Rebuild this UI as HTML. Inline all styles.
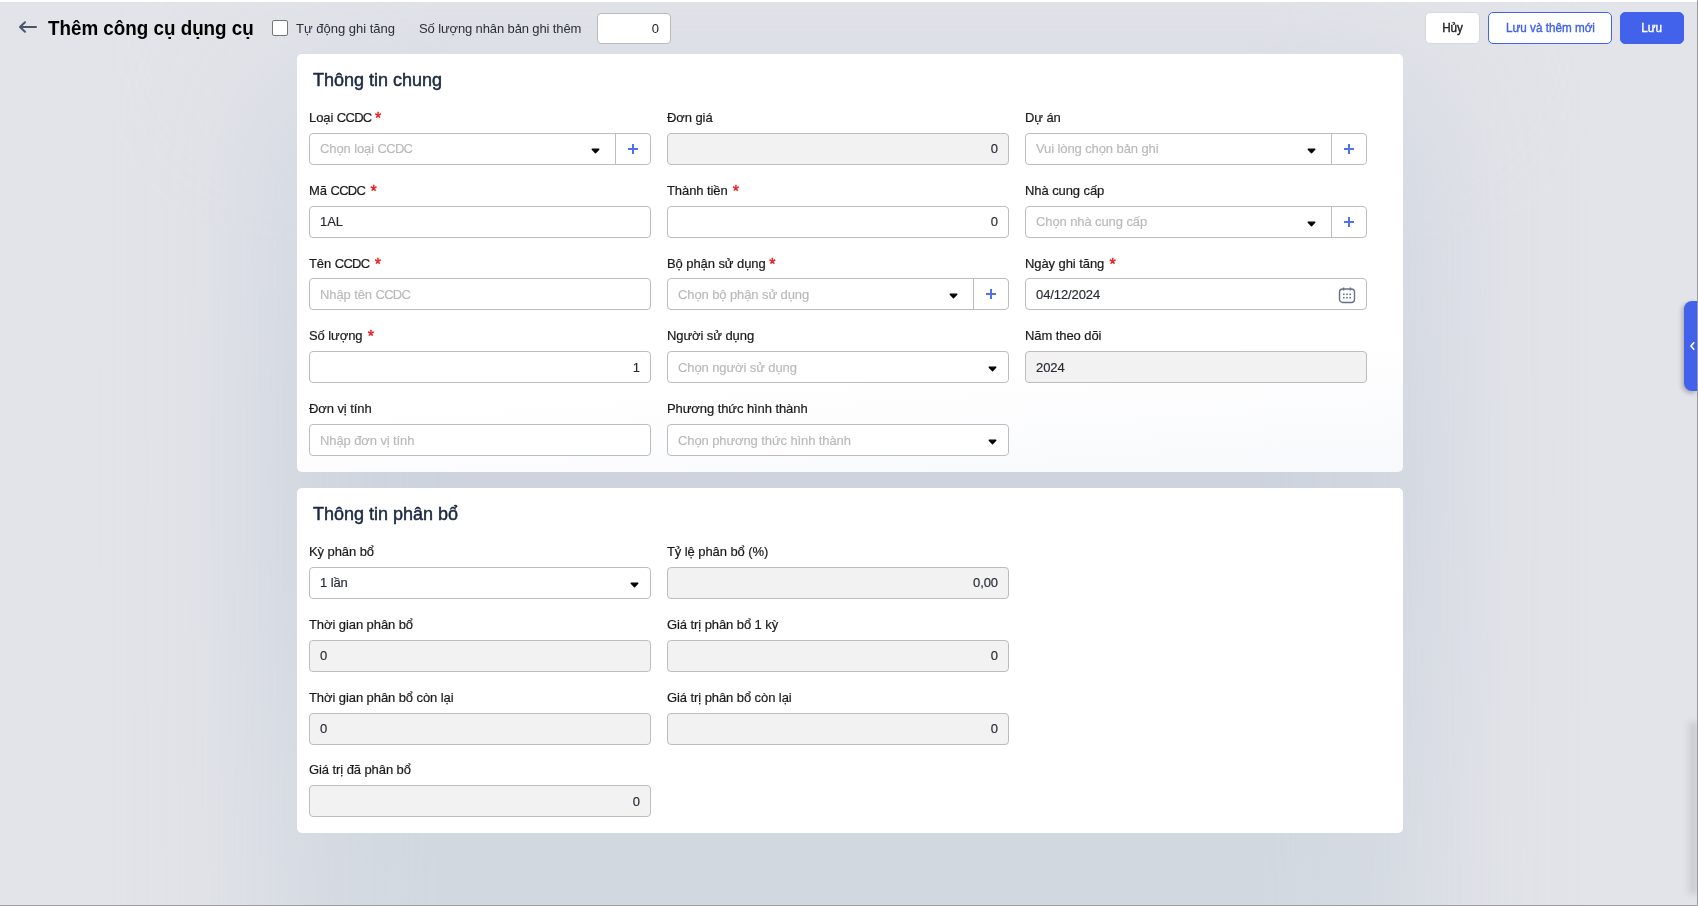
<!DOCTYPE html>
<html><head><meta charset="utf-8">
<style>
*{box-sizing:border-box;margin:0;padding:0}
html,body{width:1698px;height:906px;overflow:hidden}
body{will-change:transform;font-family:"Liberation Sans",sans-serif;font-size:13px;color:#212121;background:#e2e4e9;position:relative}
.topline{position:absolute;left:0;top:0;width:1697px;height:2px;background:#fff}
.rline{position:absolute;right:0;top:0;width:1px;height:906px;background:#9a9a9a}
.bline{position:absolute;left:0;bottom:0;width:1698px;height:1px;background:#a0a0a0}
.halo{position:absolute;left:267px;top:75px;width:1166px;height:1000px;background:linear-gradient(#d3d8e1,#cdd3dd 40%,#d2d8e0 75%,#d4dae2);filter:blur(70px)}
.abs{position:absolute}
.title{left:48px;top:17px;font-size:20px;font-weight:bold;color:#000;transform:scaleX(.94);transform-origin:0 0;white-space:nowrap}
.back{left:17px;top:18px}
.cb{left:272px;top:20px;width:16px;height:16px;border:1px solid #777;border-radius:2px;background:#fff}
.t13{font-size:13px;color:#2b2f38;white-space:nowrap}
.num{left:597px;top:13px;width:74px;height:31px;border:1px solid #bababa;border-radius:4px;background:#fff;text-align:right;padding-right:11px;line-height:30px}
.btn{top:12px;height:32px;border-radius:5px;text-align:center;line-height:30px;font-size:13px;-webkit-text-stroke:.4px currentColor;white-space:nowrap}
.btn span{display:inline-block;transform:scaleX(.9)}
.b1{left:1425px;width:55px;background:#fff;border:1px solid #d3d7de;color:#222}
.b2{left:1488px;width:124px;background:#fff;border:1px solid #4262ec;color:#4262ec}
.b3{left:1620px;width:64px;background:#4262ec;border:1px solid #4262ec;color:#fff}
.card{position:absolute;left:297px;width:1106px;background:#fff;border-radius:5px}
.c1{top:54px;height:418px;background:linear-gradient(176deg,#fff 72%,#f8f9fc 100%)}
.c2{top:488px;height:345px}
.h2{position:absolute;left:16px;font-size:18px;color:#1c2840;-webkit-text-stroke:.5px #1c2840;white-space:nowrap}
.lbl{position:absolute;font-size:13px;line-height:15px;color:#1a1a1a;-webkit-text-stroke:.2px #1a1a1a;white-space:nowrap;letter-spacing:-.08px}
.req{position:relative;top:1.5px;line-height:0;color:#f21616;font-size:16px;-webkit-text-stroke:.4px #f21616;letter-spacing:0}
.inp{position:absolute;width:342px;height:32px;border:1px solid #bdbdbd;border-radius:4px;background:#fff;line-height:30px;padding:0 10px;white-space:nowrap;color:#262a33;letter-spacing:-.1px;-webkit-text-stroke:.15px currentColor}
.cc{letter-spacing:-.7px}
.dis{background:#f2f2f2}
.ph{color:#b9b9b9}
.r{text-align:right}
.caret{position:absolute;top:13.5px;width:9px;height:7px;background:none}
.ca1{left:281px}.ca2{left:319.5px}
.plus{position:absolute;top:0;right:0;width:35px;height:30px;border-left:1px solid #bdbdbd}
.plus:before{content:"";position:absolute;left:12px;top:13.8px;width:10px;height:1.9px;background:#5170f0}
.plus:after{content:"";position:absolute;left:16.05px;top:9.8px;width:1.9px;height:10px;background:#5170f0}
.cal{position:absolute;right:10px;top:6.8px}
.rshadow{position:absolute;left:1686px;top:722px;width:11px;height:172px;background:linear-gradient(to right,rgba(0,0,0,0),rgba(0,0,0,.17));filter:blur(3px)}
.tab{position:absolute;left:1684px;top:301px;width:14px;height:90px;background:#4262ec;border-radius:8px 0 0 8px;box-shadow:-2px 2px 4px rgba(0,0,0,.25)}
</style></head>
<body>
<div class="halo"></div>
<div class="topline"></div>
<svg class="abs back" width="22" height="18" viewBox="0 0 22 18"><path d="M3 9H19M8 4.2L3 9L8 13.8" fill="none" stroke="#4b5468" stroke-width="2" stroke-linecap="round" stroke-linejoin="round"/></svg>
<div class="abs title">Thêm công cụ dụng cụ</div>
<div class="abs cb"></div>
<div class="abs t13" style="left:296px;top:21px">Tự động ghi tăng</div>
<div class="abs t13" style="left:419px;top:21px;letter-spacing:-.12px">Số lượng nhân bản ghi thêm</div>
<div class="abs num">0</div>
<div class="abs btn b1"><span>Hủy</span></div>
<div class="abs btn b2"><span>Lưu và thêm mới</span></div>
<div class="abs btn b3"><span>Lưu</span></div>
<div class="card c1">
<div class="h2" style="top:16px">Thông tin chung</div>
<div class="lbl" style="left:12px;top:56px">Loại <span class="cc">CCDC</span> <span class="req">*</span></div>
<div class="inp ph" style="left:12px;top:79px">Chọn loại <span class="cc">CCDC</span><svg class="caret ca1" viewBox="0 0 9 7"><path d="M1.2 1.2H7.8L4.5 4.7Z" fill="#000" stroke="#000" stroke-width="1.3" stroke-linejoin="round"/></svg><span class="plus"></span></div>
<div class="lbl" style="left:12px;top:129px">Mã <span class="cc">CCDC</span> <span class="req" style="margin-left:1.7px">*</span></div>
<div class="inp " style="left:12px;top:152px">1AL</div>
<div class="lbl" style="left:12px;top:202px">Tên <span class="cc">CCDC</span> <span class="req" style="margin-left:1.7px">*</span></div>
<div class="inp ph" style="left:12px;top:224px;padding-top:1px">Nhập tên <span class="cc">CCDC</span></div>
<div class="lbl" style="left:12px;top:274px">Số lượng <span class="req" style="margin-left:1.7px">*</span></div>
<div class="inp r" style="left:12px;top:297px;padding-top:1px">1</div>
<div class="lbl" style="left:12px;top:347px">Đơn vị tính</div>
<div class="inp ph" style="left:12px;top:370px;padding-top:1px">Nhập đơn vị tính</div>
<div class="lbl" style="left:370px;top:56px">Đơn giá</div>
<div class="inp dis r" style="left:370px;top:79px">0</div>
<div class="lbl" style="left:370px;top:129px">Thành tiền <span class="req" style="margin-left:1.7px">*</span></div>
<div class="inp r" style="left:370px;top:152px">0</div>
<div class="lbl" style="left:370px;top:202px">Bộ phận sử dụng <span class="req">*</span></div>
<div class="inp ph" style="left:370px;top:224px;padding-top:1px">Chọn bộ phận sử dụng<svg class="caret ca1" viewBox="0 0 9 7"><path d="M1.2 1.2H7.8L4.5 4.7Z" fill="#000" stroke="#000" stroke-width="1.3" stroke-linejoin="round"/></svg><span class="plus"></span></div>
<div class="lbl" style="left:370px;top:274px">Người sử dụng</div>
<div class="inp ph" style="left:370px;top:297px;padding-top:1px">Chọn người sử dụng<svg class="caret ca2" viewBox="0 0 9 7"><path d="M1.2 1.2H7.8L4.5 4.7Z" fill="#000" stroke="#000" stroke-width="1.3" stroke-linejoin="round"/></svg></div>
<div class="lbl" style="left:370px;top:347px">Phương thức hình thành</div>
<div class="inp ph" style="left:370px;top:370px;padding-top:1px">Chọn phương thức hình thành<svg class="caret ca2" viewBox="0 0 9 7"><path d="M1.2 1.2H7.8L4.5 4.7Z" fill="#000" stroke="#000" stroke-width="1.3" stroke-linejoin="round"/></svg></div>
<div class="lbl" style="left:728px;top:56px">Dự án</div>
<div class="inp ph" style="left:728px;top:79px">Vui lòng chọn bản ghi<svg class="caret ca1" viewBox="0 0 9 7"><path d="M1.2 1.2H7.8L4.5 4.7Z" fill="#000" stroke="#000" stroke-width="1.3" stroke-linejoin="round"/></svg><span class="plus"></span></div>
<div class="lbl" style="left:728px;top:129px">Nhà cung cấp</div>
<div class="inp ph" style="left:728px;top:152px">Chọn nhà cung cấp<svg class="caret ca1" viewBox="0 0 9 7"><path d="M1.2 1.2H7.8L4.5 4.7Z" fill="#000" stroke="#000" stroke-width="1.3" stroke-linejoin="round"/></svg><span class="plus"></span></div>
<div class="lbl" style="left:728px;top:202px">Ngày ghi tăng <span class="req" style="margin-left:1.7px">*</span></div>
<div class="inp " style="left:728px;top:224px;padding-top:1px">04/12/2024<svg class="cal" width="18" height="18" viewBox="0 0 18 18"><rect x="1.5" y="3" width="15" height="13.5" rx="3.2" fill="none" stroke="#687088" stroke-width="1.4"/><path d="M5.6 1.4V4.6M12.4 1.4V4.6" stroke="#687088" stroke-width="1.4"/><g fill="#687088"><rect x="5" y="7.5" width="1.6" height="1.6"/><rect x="8.2" y="7.5" width="1.6" height="1.6"/><rect x="11.4" y="7.5" width="1.6" height="1.6"/><rect x="5" y="10.9" width="1.6" height="1.6"/><rect x="8.2" y="10.9" width="1.6" height="1.6"/><rect x="11.4" y="10.9" width="1.6" height="1.6"/></g></svg></div>
<div class="lbl" style="left:728px;top:274px">Năm theo dõi</div>
<div class="inp dis" style="left:728px;top:297px;padding-top:1px">2024</div>
</div>
<div class="card c2">
<div class="h2" style="top:16px">Thông tin phân bổ</div>
<div class="lbl" style="left:12px;top:56px">Kỳ phân bổ</div>
<div class="inp " style="left:12px;top:79px">1 lần<svg class="caret ca2" viewBox="0 0 9 7"><path d="M1.2 1.2H7.8L4.5 4.7Z" fill="#000" stroke="#000" stroke-width="1.3" stroke-linejoin="round"/></svg></div>
<div class="lbl" style="left:12px;top:129px">Thời gian phân bổ</div>
<div class="inp dis" style="left:12px;top:152px">0</div>
<div class="lbl" style="left:12px;top:201.5px">Thời gian phân bổ còn lại</div>
<div class="inp dis" style="left:12px;top:224.5px">0</div>
<div class="lbl" style="left:12px;top:274px">Giá trị đã phân bổ</div>
<div class="inp dis r" style="left:12px;top:297px;padding-top:1px">0</div>
<div class="lbl" style="left:370px;top:56px">Tỷ lệ phân bổ (%)</div>
<div class="inp dis r" style="left:370px;top:79px">0,00</div>
<div class="lbl" style="left:370px;top:129px">Giá trị phân bổ 1 kỳ</div>
<div class="inp dis r" style="left:370px;top:152px">0</div>
<div class="lbl" style="left:370px;top:201.5px">Giá trị phân bổ còn lại</div>
<div class="inp dis r" style="left:370px;top:224.5px">0</div>
</div>
<div class="tab"><svg width="14" height="90" viewBox="0 0 14 90"><path d="M10.2 41.3L7 45L10.2 48.7" fill="none" stroke="#fff" stroke-width="1.6"/></svg></div>
<div class="rshadow"></div>
<div class="rline"></div>
<div class="bline"></div>
</body></html>
